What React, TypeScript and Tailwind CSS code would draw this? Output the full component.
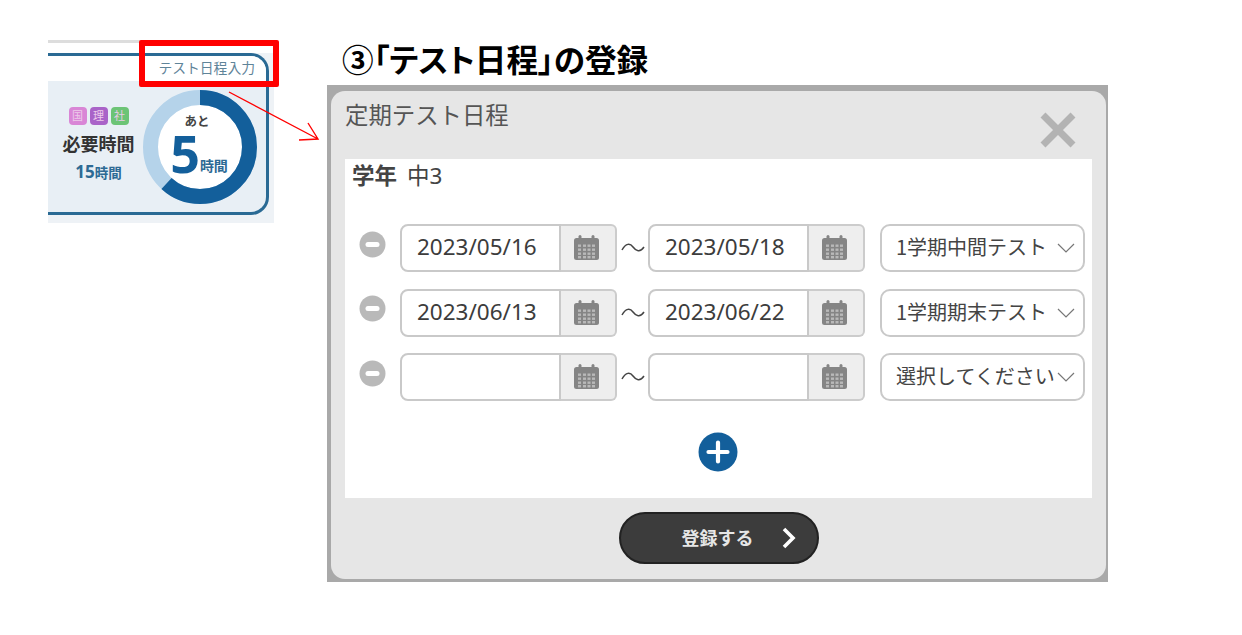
const jp = "font-['Noto_Sans','Noto_Sans_CJK_JP',sans-serif]";

const CalendarIcon = () => (
  <svg width="27" height="27" viewBox="0 0 27 27">
    <rect x="1" y="4" width="25" height="22" rx="2.5" fill="#858585" />
    <rect x="5.5" y="1" width="3" height="6" rx="1.5" fill="#858585" />
    <rect x="18.5" y="1" width="3" height="6" rx="1.5" fill="#858585" />
    {[10.5, 14.5, 18.5, 22].map((y) =>
      [5, 10, 14.5, 19].map((x) => <rect key={`${x}-${y}`} x={x} y={y} width="3" height="2.4" fill="#b9b9b9" />)
    )}
  </svg>
);

const DateField = ({ value }: { value: string }) => (
  <div className="flex h-[48px]">
    <div className="w-[161px] h-full bg-white border-2 border-[#c9c9c9] rounded-l-[8px] flex items-center pl-[15px] pb-[2px] text-[22.5px] text-[#3c3c3c] z-10">
      {value}
    </div>
    <div className="w-[57px] h-full -ml-[1px] bg-[#eeeeee] border-2 border-l-0 border-[#cccccc] rounded-r-[6px] flex items-center justify-center pr-[2px] pb-[1px]">
      <CalendarIcon />
    </div>
  </div>
);

const rows = [
  { from: "2023/05/16", to: "2023/05/18", term: "1学期中間テスト" },
  { from: "2023/06/13", to: "2023/06/22", term: "1学期期末テスト" },
  { from: "", to: "", term: "選択してください" },
];

const Row = ({ from, to, term }: { from: string; to: string; term: string }) => (
  <div className="flex items-center h-[48px]">
    <div className="w-[55px] pl-[14px] -mt-[8px]">
      <svg width="27" height="27" viewBox="0 0 27 27" className="block">
        <circle cx="13.5" cy="13.5" r="13" fill="#b9b9b9" />
        <rect x="6.5" y="11" width="14" height="5" rx="2.5" fill="#fff" />
      </svg>
    </div>
    <DateField value={from} />
    <div className="w-[31px] flex justify-center">
      <svg width="24" height="12" viewBox="0 0 24 12">
        <path d="M1 8C5 1 9 1 12 5s7 6 11 0" fill="none" stroke="#444" strokeWidth="1.5" />
      </svg>
    </div>
    <DateField value={to} />
    <div className="ml-[15px] w-[205px] h-[48px] bg-white border-2 border-[#c9c9c9] rounded-[10px] flex items-center pl-[14px] pr-[8px] pb-[2px] text-[#444]">
      <span className="flex-1 whitespace-nowrap text-[20px] font-['Noto_Sans_CJK_JP',sans-serif]">{term}</span>
      <svg width="18" height="10" viewBox="0 0 18 10" className="shrink-0 -ml-[1px] mt-[2px]">
        <path d="M1 1l8 8 8-8" fill="none" stroke="#777" strokeWidth="1.2" />
      </svg>
    </div>
  </div>
);

export default function App() {
  return (
    <div className={`relative w-[1242px] h-[635px] overflow-hidden bg-white ${jp}`}>
      {/* left: card clipping */}
      <div className="absolute left-[48px] top-[40px] w-[226px] h-[183px] bg-[#eef2f6] pr-[5px] pb-[8px] flex flex-col">
        <div className="h-[13px] -mr-[5px] shrink-0 bg-white border-t-[3px] border-[#dddddd]" />
        <div className="flex-1 min-h-0 bg-[#e8eff5] border-y-[3px] border-r-[3px] border-[#2a6a94] rounded-r-[18px] overflow-hidden flex flex-col">
          <div className="h-[25px] bg-white shrink-0 flex justify-end pr-[11px] pt-[2px] text-[13.8px] leading-[20px] text-[#5f8499]">
            テスト日程入力
          </div>
          <div className="flex-1 flex items-center pl-[13px] pr-[8px]">
            <div className="w-[75px] flex flex-col items-center -mt-[2px]">
              <div className="flex gap-[3px] text-[11px] leading-[18px] text-[#eccbea]">
                <span className="w-[18px] h-[18px] rounded-[4px] bg-[#d986d6] text-center">国</span>
                <span className="w-[18px] h-[18px] rounded-[4px] bg-[#a963c8] text-center">理</span>
                <span className="w-[18px] h-[18px] rounded-[4px] bg-[#6cc476] text-center">社</span>
              </div>
              <div className="mt-[6px] text-[18px] leading-[26px] font-bold text-[#333] whitespace-nowrap">必要時間</div>
              <div className="mt-[4px] flex items-baseline font-bold text-[#2d6a94] leading-[22px]">
                <span className="text-[17px]">15</span>
                <span className="text-[13.5px]">時間</span>
              </div>
            </div>
            <div className="relative ml-[7px] w-[114px] h-[114px]">
              <svg width="114" height="114" viewBox="0 0 114 114" className="block">
                <circle cx="57" cy="57" r="49.5" fill="#fff" stroke="#b5d3ea" strokeWidth="15" />
                <circle
                  cx="57"
                  cy="57"
                  r="49.5"
                  fill="none"
                  stroke="#135f9b"
                  strokeWidth="15"
                  strokeDasharray="192 311"
                  transform="rotate(-90 57 57)"
                />
              </svg>
              <div className="absolute inset-0 flex flex-col items-center justify-center">
                <div className="text-[12.5px] leading-[14px] font-bold text-[#444] -ml-[6px] -mt-[2px]">あと</div>
                <div className="flex items-end mt-[1px] -ml-[2px]">
                  <span className="text-[52px] leading-[46px] font-bold text-[#135f9b]">5</span>
                  <span className="text-[14px] leading-[20px] font-bold text-[#2d6a94]">時間</span>
                </div>
              </div>
            </div>
          </div>
        </div>
      </div>
      <div className="absolute left-[139px] top-[40px] w-[140px] h-[47px] border-[6px] border-[#ff0000] rounded-[2px]" />
      <svg className="absolute left-[225px] top-[88px]" width="100" height="60" viewBox="0 0 100 60">
        <path d="M4 4l89 47M83 35l10 16-19 1" fill="none" stroke="#ff0000" strokeWidth="1.4" />
      </svg>

      <h1 className="absolute left-[342px] top-[40px] text-[31.6px] leading-[40px] font-bold text-black whitespace-nowrap [font-feature-settings:'palt']">
        ③「テスト日程」の登録
      </h1>

      {/* right: dialog */}
      <div className="absolute left-[327px] top-[85px] w-[781px] h-[497px] bg-[#a9a9a9] pt-[6px] pl-[4px] pr-[2px] pb-[3px]">
        <div className="h-full bg-[#e6e6e6] rounded-[14px] flex flex-col">
          <div className="h-[68px] shrink-0 flex justify-between pl-[14px] pr-[30px]">
            <div className="text-[23.4px] leading-[30px] pt-[9px] text-[#555] whitespace-nowrap">定期テスト日程</div>
            <svg width="36" height="36" viewBox="0 0 36 36" className="mt-[21px]">
              <path d="M3 3l30 30M33 3L3 33" stroke="#b3b3b3" strokeWidth="7" />
            </svg>
          </div>
          <div className="mx-[14px] h-[339px] bg-white flex flex-col">
            <div className="pl-[7px] pt-[2px] text-[22.5px] leading-[30px] text-[#444] flex gap-[10px]">
              <span className="font-bold">学年</span>
              <span>中3</span>
            </div>
            <div className="mt-[33px] flex flex-col gap-[16.5px]">
              {rows.map((r) => (
                <Row key={r.term} {...r} />
              ))}
            </div>
            <div className="mt-[31px] flex justify-center pr-[2px]">
              <svg width="40" height="40" viewBox="0 0 40 40" className="block">
                <circle cx="20" cy="20" r="19.5" fill="#135f9b" />
                <path d="M20 10.5v19M10.5 20h19" stroke="#fff" strokeWidth="4.2" strokeLinecap="round" />
              </svg>
            </div>
          </div>
          <div className="flex-1 flex justify-center pt-[14px]">
            <div className="relative w-[200px] h-[52px] rounded-full bg-[#3c3c3c] border-2 border-[#222] flex items-center justify-center pr-[2px] text-[18px] font-bold text-[#e6e6e6]">
              登録する
              <svg width="16" height="24" viewBox="0 0 16 24" className="absolute right-[20px] top-[12px]">
                <path d="M3 3l9 9-9 9" fill="none" stroke="#fff" strokeWidth="3.6" />
              </svg>
            </div>
          </div>
        </div>
      </div>
    </div>
  );
}
